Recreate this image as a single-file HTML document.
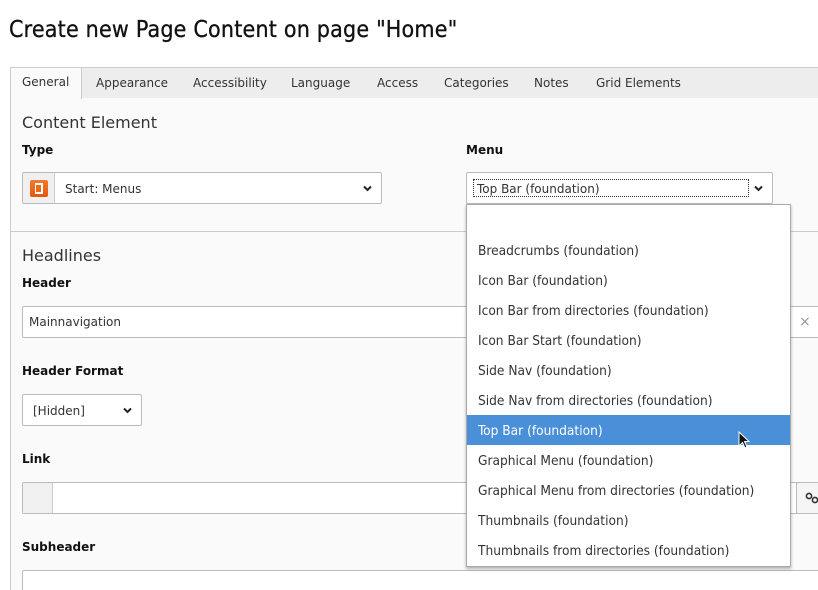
<!DOCTYPE html>
<html><head><style>
*{box-sizing:border-box;margin:0;padding:0}
html,body{width:818px;height:590px;overflow:hidden}
body{background:#fff;font-family:"DejaVu Sans","Liberation Sans",sans-serif;color:#333;position:relative}
.a{position:absolute}
.title{left:9px;top:17px;font-family:"DejaVu Sans Condensed","DejaVu Sans",sans-serif;font-size:23px;color:#111;white-space:nowrap;letter-spacing:.2px;-webkit-text-stroke:.3px #111}
.tabs{left:10px;top:67px;width:808px;height:32px;background:#ededed;border:1px solid #ccc;border-right:none}
.tab{position:absolute;top:8px;font-size:12px;color:#333;white-space:nowrap}
.gen{left:10px;top:67px;width:72px;height:32px;background:#fafafa;border:1px solid #ccc;border-bottom:none;z-index:2}
.panel{left:10px;top:98px;width:808px;height:492px;background:#fafafa;border-left:1px solid #ccc}
.h{font-size:16px;color:#333}
.lbl{font-size:12px;font-weight:bold;color:#111}
.inp{background:#fff;border:1px solid #bbb;border-radius:2px}
.txt{font-size:12px;color:#333;position:absolute;white-space:nowrap}
.chev{position:absolute;width:9px;height:7px}
.dd{left:466px;top:204px;width:325px;height:363px;background:#fff;border:1px solid #aaa;box-shadow:0 2px 3px rgba(0,0,0,.3);z-index:5}
.it{position:absolute;left:0;width:323px;height:30px;line-height:32px;padding-left:11px;font-family:"DejaVu Sans Condensed","DejaVu Sans",sans-serif;font-size:13.6px;color:#333;white-space:nowrap}
.sel{background:#4a90d9;color:#fff}
</style></head><body>
<div class="a title">Create new Page Content on page "Home"</div>
<div class="a tabs">
<span class="tab" style="left:85px">Appearance</span>
<span class="tab" style="left:182px">Accessibility</span>
<span class="tab" style="left:280px">Language</span>
<span class="tab" style="left:366px">Access</span>
<span class="tab" style="left:433px">Categories</span>
<span class="tab" style="left:523px">Notes</span>
<span class="tab" style="left:585px">Grid Elements</span>
</div>
<div class="a gen"><span class="tab" style="left:11px;top:7px">General</span></div>
<div class="a panel"></div>
<div class="a h" style="left:22px;top:113px">Content Element</div>
<div class="a lbl" style="left:22px;top:143px">Type</div>
<div class="a inp" style="left:22px;top:172px;width:360px;height:32px">
 <div class="a" style="left:0;top:0;width:32px;height:30px;background:#f0f0f0;border-right:1px solid #ccc"></div>
 <div class="a" style="left:7px;top:7px;width:18px;height:17px;background:linear-gradient(#f37a2e,#e4570c);border-radius:2px"><div class="a" style="left:5px;top:3px;width:8px;height:11px;border:2px solid #fff;border-left-width:1px;background:#e86a1d"></div></div>
 <span class="txt" style="left:42px;top:9px">Start: Menus</span>
 <svg class="chev" style="right:9px;top:12px" viewBox="0 0 9 7"><path d="M1 1.5 L4.5 5 L8 1.5" fill="none" stroke="#222" stroke-width="2"/></svg>
</div>
<div class="a lbl" style="left:466px;top:143px">Menu</div>
<div class="a inp" style="left:466px;top:172px;width:307px;height:32px">
 <div class="a" style="left:6px;top:6px;width:276px;height:18px;border:1px dotted #333"></div>
 <span class="txt" style="left:10px;top:9px">Top Bar (foundation)</span>
 <svg class="chev" style="right:9px;top:12px" viewBox="0 0 9 7"><path d="M1 1.5 L4.5 5 L8 1.5" fill="none" stroke="#222" stroke-width="2"/></svg>
</div>
<div class="a" style="left:10px;top:231px;width:808px;height:1px;background:#ccc"></div>
<div class="a h" style="left:22px;top:246px">Headlines</div>
<div class="a lbl" style="left:22px;top:276px">Header</div>
<div class="a inp" style="left:22px;top:306px;width:800px;height:32px"><span class="txt" style="left:6px;top:8px">Mainnavigation</span><span class="txt" style="left:776px;top:7px;color:#999;font-size:14px">×</span></div>
<div class="a lbl" style="left:22px;top:364px">Header Format</div>
<div class="a inp" style="left:22px;top:394px;width:120px;height:32px"><span class="txt" style="left:10px;top:9px">[Hidden]</span>
 <svg class="chev" style="right:9px;top:12px" viewBox="0 0 9 7"><path d="M1 1.5 L4.5 5 L8 1.5" fill="none" stroke="#222" stroke-width="2"/></svg></div>
<div class="a lbl" style="left:22px;top:452px">Link</div>
<div class="a inp" style="left:22px;top:482px;width:800px;height:32px"><div class="a" style="left:0;top:0;width:30px;height:30px;background:#f0f0f0;border-right:1px solid #ccc"></div></div>
<div class="a inp" style="left:796px;top:482px;width:30px;height:32px;background:#f5f5f5">
 <svg class="a" style="left:8px;top:8px" width="14" height="14" viewBox="0 0 14 14"><circle cx="4" cy="5" r="2.6" fill="none" stroke="#333" stroke-width="1.6"/><circle cx="10" cy="9" r="2.6" fill="none" stroke="#333" stroke-width="1.6"/></svg></div>
<div class="a lbl" style="left:22px;top:540px">Subheader</div>
<div class="a inp" style="left:22px;top:570px;width:800px;height:32px"></div>
<div class="a dd">
<div class="it" style="top:0"></div>
<div class="it" style="top:30px">Breadcrumbs (foundation)</div>
<div class="it" style="top:60px">Icon Bar (foundation)</div>
<div class="it" style="top:90px">Icon Bar from directories (foundation)</div>
<div class="it" style="top:120px">Icon Bar Start (foundation)</div>
<div class="it" style="top:150px">Side Nav (foundation)</div>
<div class="it" style="top:180px">Side Nav from directories (foundation)</div>
<div class="it sel" style="top:210px">Top Bar (foundation)</div>
<div class="it" style="top:240px">Graphical Menu (foundation)</div>
<div class="it" style="top:270px">Graphical Menu from directories (foundation)</div>
<div class="it" style="top:300px">Thumbnails (foundation)</div>
<div class="it" style="top:330px">Thumbnails from directories (foundation)</div>
<svg class="a" style="left:271px;top:226px" width="14" height="20" viewBox="0 0 14 20"><path d="M1 1 L1 15 L4.5 11.5 L7 17 L9 16 L6.5 10.5 L11 10.5 Z" fill="#111" stroke="#fff" stroke-width="1"/></svg>
</div>
</body></html>
